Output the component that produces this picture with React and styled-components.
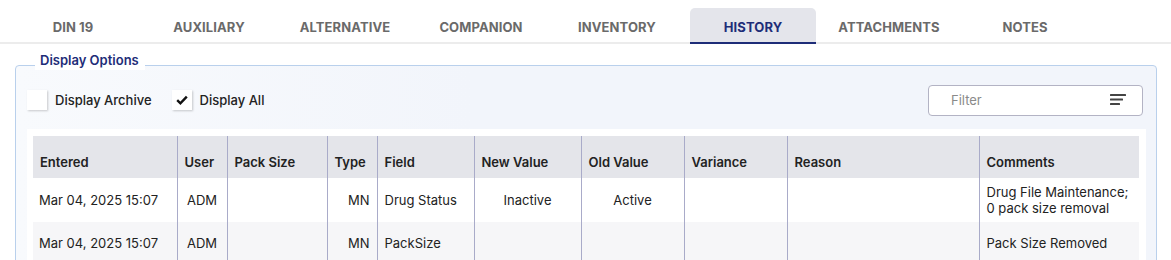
import styled, { createGlobalStyle } from "styled-components";

const GlobalStyle = createGlobalStyle`
  body {
    margin: 0;
    background: #ffffff;
    font-family: Inter, "Noto Sans", sans-serif;
    color: #222222;
  }
`

const tabs = ["DIN 19", "AUXILIARY", "ALTERNATIVE", "COMPANION", "INVENTORY", "HISTORY", "ATTACHMENTS", "NOTES"]

const columns = [
    { key: "entered", label: "Entered", width: 144, align: "left" },
    { key: "user", label: "User", width: 50, align: "center" },
    { key: "pack", label: "Pack Size", width: 100, align: "left" },
    { key: "type", label: "Type", width: 50, align: "right" },
    { key: "field", label: "Field", width: 97, align: "left" },
    { key: "newValue", label: "New Value", width: 107, align: "center" },
    { key: "oldValue", label: "Old Value", width: 103, align: "center" },
    { key: "variance", label: "Variance", width: 103, align: "left" },
    { key: "reason", label: "Reason", width: 192, align: "left" },
    { key: "comments", label: "Comments", width: 160, align: "left" },
]

const rows = [
    {
        id: 1,
        entered: "Mar 04, 2025 15:07",
        user: "ADM",
        pack: "",
        type: "MN",
        field: "Drug Status",
        newValue: "Inactive",
        oldValue: "Active",
        variance: "",
        reason: "",
        comments: "Drug File Maintenance;\n0 pack size removal",
    },
    {
        id: 2,
        entered: "Mar 04, 2025 15:07",
        user: "ADM",
        pack: "",
        type: "MN",
        field: "PackSize",
        newValue: "",
        oldValue: "",
        variance: "",
        reason: "",
        comments: "Pack Size Removed",
    },
]

const SortIcon = () => (
    <svg width="16" height="12" viewBox="0 0 16 12">
        <rect x="0" y="0" width="16" height="2" rx="0.5" fill="#444" />
        <rect x="0" y="4.5" width="13" height="2" rx="0.5" fill="#444" />
        <rect x="0" y="9" width="10" height="2" rx="0.5" fill="#444" />
    </svg>
)

const CheckIcon = () => (
    <svg width="12" height="10" viewBox="0 0 12 10">
        <path d="M1.2 5.2 L4.4 8.3 L10.8 1.6" fill="none" stroke="#111" strokeWidth="2.4" />
    </svg>
)

const App = () => {
    return (
      <>
        <GlobalStyle />
        <Page>
            <TabBar>
                {tabs.map((tab) => (
                    <Tab key={tab} $active={tab === "HISTORY"}>{tab}</Tab>
                ))}
            </TabBar>

            <Panel>
                <Legend>Display Options</Legend>
                <Options>
                    <Check>
                        <Box />
                        Display Archive
                    </Check>
                    <Check>
                        <Box><CheckIcon /></Box>
                        Display All
                    </Check>
                    <Filter>
                        <span>Filter</span>
                        <SortIcon />
                    </Filter>
                </Options>

                <TableWrap>
                    <Table>
                        <colgroup>
                            {columns.map((col) => <col key={col.key} style={{ width: col.width }} />)}
                        </colgroup>
                        <thead>
                            <tr>
                                {columns.map((col) => <Th key={col.key}>{col.label}</Th>)}
                            </tr>
                        </thead>
                        <tbody>
                            {rows.map((row, i) => (
                                <Row key={row.id} $striped={i % 2 === 1}>
                                    {columns.map((col) => (
                                        <Td key={col.key} $align={col.align}>{row[col.key]}</Td>
                                    ))}
                                </Row>
                            ))}
                        </tbody>
                    </Table>
                </TableWrap>
            </Panel>
        </Page>
      </>
    )
}

const Page = styled.div`
    width: 1171px;
    height: 260px;
    overflow: hidden;
`

const TabBar = styled.div`
    display: flex;
    gap: 10px;
    padding: 8px 0 0 10px;
    border-bottom: 2px solid #ececec;
`

const Tab = styled.div`
    width: 126px;
    height: 36px;
    margin-bottom: -2px;
    padding-top: 3px;
    box-sizing: border-box;
    display: flex;
    align-items: center;
    justify-content: center;
    font-size: 13px;
    font-weight: 700;
    letter-spacing: 0.1px;
    color: ${(props) => (props.$active ? "#1e2d78" : "#6a6a6a")};
    background: ${(props) => (props.$active ? "#e4e5eb" : "transparent")};
    border-radius: 5px 5px 0 0;
    border-bottom: 2px solid ${(props) => (props.$active ? "#1e2d78" : "transparent")};
`

const Panel = styled.div`
    position: relative;
    margin: 21px 14px 0 15px;
    padding: 18px 10px 0 11px;
    border: 1px solid #b9d0ec;
    border-radius: 4px;
    background: linear-gradient(to right, #f8fafd, #f2f5fb 40%);
    height: 300px;
`

const Legend = styled.div`
    position: absolute;
    top: -17px;
    left: 19px;
    padding: 3px 6px 2px 5px;
    background: #ffffff;
    font-size: 13px;
    font-weight: 600;
    line-height: 16px;
    color: #1e2d78;
`

const Options = styled.div`
    display: flex;
    align-items: center;
    height: 32px;
`

const Check = styled.label`
    display: flex;
    align-items: center;
    gap: 8px;
    margin-right: 20px;
    font-size: 13px;
    font-weight: 500;
    color: #222222;
`

const Box = styled.span`
    width: 20px;
    height: 20px;
    display: flex;
    align-items: center;
    justify-content: center;
    background: #ffffff;
    box-shadow: 1px 1px 2px rgba(0, 0, 0, 0.2);
`

const Filter = styled.div`
    margin-left: auto;
    margin-right: 3px;
    width: 215px;
    height: 31px;
    box-sizing: border-box;
    display: flex;
    align-items: center;
    justify-content: space-between;
    padding: 0 16px 0 22px;
    background: #ffffff;
    border: 1px solid #b3b3c4;
    border-radius: 4px;
    font-size: 13px;
    color: #8a8a8a;
`

const TableWrap = styled.div`
    margin-top: 13px;
    padding: 7px 6px 0 6px;
    background: #ffffff;
`

const Table = styled.table`
    width: 1106px;
    table-layout: fixed;
    border-collapse: collapse;
    font-size: 13px;
`

const Th = styled.th`
    height: 42px;
    padding: 8px 8px 8px 7px;
    box-sizing: border-box;
    vertical-align: bottom;
    text-align: left;
    font-weight: 600;
    color: #222222;
    background: #e4e5ea;
    border-left: 1px solid #a9abc9;
    line-height: 16px;
    &:first-child {
        border-left: none;
    }
`

const Row = styled.tr`
    background: ${(props) => (props.$striped ? "#f6f6f8" : "#ffffff")};
`

const Td = styled.td`
    height: 44px;
    padding: 5px 7px;
    box-sizing: border-box;
    text-align: ${(props) => props.$align};
    border-left: 1px solid #a9abc9;
    line-height: 16px;
    white-space: pre-line;
    color: #222222;
    &:first-child {
        border-left: none;
        padding-left: 6px;
    }
    tr + tr > & {
        height: 42px;
    }
`

export default App;
